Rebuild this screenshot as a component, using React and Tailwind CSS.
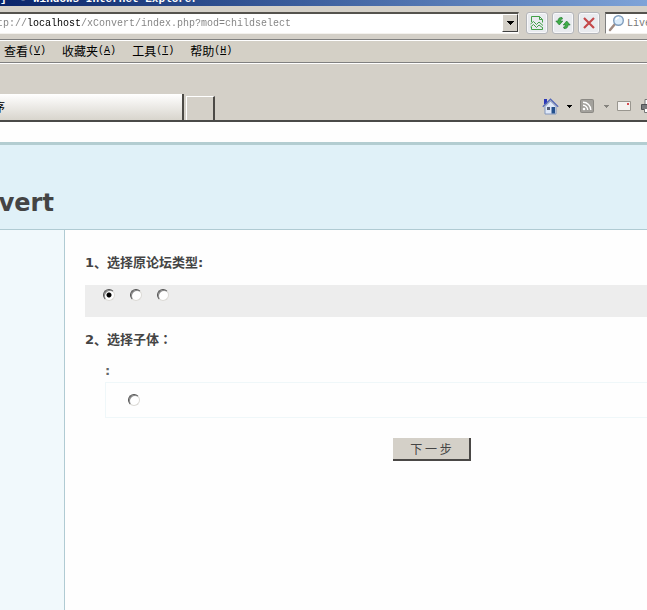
const menus = [
  { label: '查看', mnemonic: 'V' },
  { label: '收藏夹', mnemonic: 'A' },
  { label: '工具', mnemonic: 'T' },
  { label: '帮助', mnemonic: 'H' },
];

function TitleBar() {
  return (
    <div className="flex h-1.5 items-end overflow-hidden bg-linear-to-r from-[#0a246a] to-[#7ea3d8]">
      <div className="mb-px whitespace-pre font-['Liberation_Mono',monospace] text-[11px] leading-[11px] font-bold text-white">
        {']  - Windows Internet Explorer'}
      </div>
    </div>
  );
}

function ToolButton({ label, children }) {
  return (
    <button
      aria-label={label}
      className="flex size-[22px] shrink-0 items-center justify-center rounded-[3px] border border-[#b4b6ba] bg-[#e9ebef] shadow-[inset_0_0_0_1px_#f8f8fa]"
    >
      {children}
    </button>
  );
}

function AddressBar() {
  return (
    <div className="flex h-[33px] items-center gap-1 overflow-hidden bg-[#d4d0c8]">
      <div className="flex h-[22px] min-w-0 flex-1 border-t-2 border-r border-b border-t-[#55534e] border-r-[#f4f2ee] border-b-[#f4f2ee] bg-white">
        <div className="flex min-w-0 flex-1 overflow-hidden">
          <input
            aria-label="地址"
            defaultValue="http://localhost/xConvert/index.php?mod=childselect"
            className="-ml-[15px] block h-full min-w-0 flex-1 bg-[linear-gradient(90deg,#808080_42px,#000_42px,#000_96px,#808080_96px)] bg-clip-text font-['Liberation_Mono',monospace] text-[10px] text-transparent outline-none"
          />
        </div>
        <button
          aria-label="展开地址列表"
          className="flex h-[18px] w-4 items-center justify-center border border-t-white border-r-[#404040] border-b-[#404040] border-l-white bg-[#d4d0c8]"
        >
          <svg width="7" height="4" viewBox="0 0 7 4" shapeRendering="crispEdges">
            <path d="M0 0h7L3.5 4z" />
          </svg>
        </button>
      </div>
      <div className="flex gap-1 pr-px pl-[3px]">
        <ToolButton label="兼容性视图">
          <svg width="14" height="16" viewBox="0 0 14 16" fill="none" stroke="#43a047">
            <path d="M1.500 7V1.500h8l3 3v3M9.500 1.500v3h3M1.500 12v2.500h11V13" />
            <path d="M.5 9l3-2.500 3 3L9 7l4 3.500M.5 12l3-2.500 3 3L9 10l4 3" />
          </svg>
        </ToolButton>
        <ToolButton label="刷新">
          <svg width="16" height="14" viewBox="0 0 16 14" fill="#3fae48" stroke="#1c7228" strokeWidth=".6">
            <path d="M7 1.500C4.500 1 3 2.500 3 5H.8L4.300 9 7.800 5H5.600C5.600 3.800 6 3.200 7.500 3z" />
            <path d="M9 12.500c2.500.5 4-1 4-3.500h2.200l-3.500-4-3.500 4h2.200c0 1.200-.4 1.800-1.900 2z" />
          </svg>
        </ToolButton>
        <ToolButton label="停止">
          <svg width="12" height="12" viewBox="0 0 12 12" fill="none" stroke="#c4484a" strokeWidth="2.200">
            <path d="M1 1l10 10M11 1L1 11" />
          </svg>
        </ToolButton>
      </div>
      <div className="flex h-[22px] w-[42px] shrink-0 items-center overflow-hidden border-t-2 border-b border-l border-t-[#55534e] border-b-[#f4f2ee] border-l-[#808080] bg-white">
        <svg width="18" height="18" viewBox="0 0 18 18" className="mr-px ml-0.5 shrink-0" fill="none">
          <path d="M2 16l5-6" stroke="#a08a80" strokeWidth="2.500" strokeLinecap="round" />
          <circle cx="10.500" cy="6.500" r="4.800" fill="#dcecfa" stroke="#7f9dbd" strokeWidth="1.400" />
          <path d="M8 6a3 3 0 013-2.500" stroke="#fff" strokeWidth="1.500" />
        </svg>
        <input
          aria-label="搜索"
          placeholder="Live Search"
          className="w-20 shrink-0 font-['Liberation_Mono',monospace] text-[10px] outline-none placeholder:text-[#777]"
        />
      </div>
    </div>
  );
}

function MenuBar() {
  return (
    <nav className="flex h-6 items-center gap-4 border-t border-b border-t-[#808080] border-b-[#808080] bg-[#d4d0c6] pl-1 shadow-[inset_0_1px_0_#fff]">
      {menus.map((m) => (
        <button
          key={m.label}
          className="flex items-center font-['Noto_Sans_CJK_SC',sans-serif] text-xs leading-4 whitespace-nowrap text-black"
        >
          {m.label}
          <span className="font-['Liberation_Mono',monospace] text-[10px]">
            (<u>{m.mnemonic}</u>)
          </span>
        </button>
      ))}
    </nav>
  );
}

function HomeIcon() {
  return (
    <svg width="17" height="17" viewBox="0 0 17 17">
      <path d="M2 1h3v5H2z" fill="#2a35b8" />
      <path d="M3 8.500L8.500 3 14 8.500V16H3z" fill="#dfe8f8" stroke="#8296bd" />
      <path d="M.8 8.800L8.500 1.200l7.700 7.600" fill="none" stroke="#5468b8" strokeWidth="1.200" />
      <path d="M5 9h3v3H5z" fill="#555f7a" />
      <path d="M9.500 9H13v6.500H9.500z" fill="#24508c" />
    </svg>
  );
}

function FeedIcon() {
  return (
    <svg width="14" height="14" viewBox="0 0 14 14">
      <rect width="14" height="14" rx="2" fill="#8b8984" />
      <rect x="1" y="1" width="12" height="12" rx="1" fill="#a3a19c" />
      <circle cx="4" cy="10" r="1.300" fill="#fff" />
      <path d="M3 6.300A4.700 4.700 0 017.700 11M3 3.200A7.800 7.800 0 0110.800 11" fill="none" stroke="#fff" strokeWidth="1.400" />
    </svg>
  );
}

function Caret({ color }) {
  return (
    <svg width="5" height="3" viewBox="0 0 5 3" fill={color} shapeRendering="crispEdges">
      <path d="M0 0h5L2.500 3z" />
    </svg>
  );
}

function TabRow() {
  return (
    <div className="flex h-[59px] items-end justify-between overflow-hidden border-b-2 border-b-[#4a4a48] bg-[#d4d0c8] shadow-[inset_0_1px_0_#fff]">
      <div className="flex items-end gap-0.5">
        <button className="flex h-[26px] w-[184px] items-center overflow-hidden border-r-2 border-r-[#4c4a46] bg-linear-to-b from-white to-[#d8d5cd] text-left font-['Noto_Sans_CJK_SC',sans-serif] text-xs whitespace-nowrap text-black">
          <span className="-ml-[19px]">程序</span>
        </button>
        <button
          aria-label="新选项卡"
          className="h-6 w-[29px] border-t border-r-2 border-l border-t-white border-r-[#4c4a46] border-l-white bg-[#d4d0c8]"
        />
      </div>
      <div className="-mr-2.5 flex h-7 items-center">
        <button aria-label="主页" className="mr-2">
          <HomeIcon />
        </button>
        <button aria-label="主页选项" className="mr-2">
          <Caret color="#000" />
        </button>
        <button aria-label="订阅源" className="mr-2.5">
          <FeedIcon />
        </button>
        <button aria-label="订阅源选项" className="mr-2">
          <Caret color="#85837e" />
        </button>
        <button aria-label="阅读邮件" className="mr-2.5">
          <svg width="14" height="10" viewBox="0 0 14 10">
            <path d="M.5.5h13v9H.5z" fill="#f4f2f0" stroke="#99968f" />
            <path d="M10 2h2v2h-2z" fill="#d84a50" />
          </svg>
        </button>
        <button aria-label="打印">
          <svg width="16" height="14" viewBox="0 0 16 14">
            <path d="M4 .5h8V6H4z" fill="#fff" stroke="#777" />
            <path d="M.5 5.500h15v5H.5z" fill="#77797c" stroke="#505254" />
            <path d="M3.500 9.500h9v4h-9z" fill="#fff" stroke="#777" />
          </svg>
        </button>
      </div>
    </div>
  );
}

function Radio({ name, label, defaultChecked }) {
  return (
    <input
      type="radio"
      name={name}
      aria-label={label}
      defaultChecked={defaultChecked}
      className="block size-3 shrink-0 appearance-none rounded-full border border-t-[#505050] border-r-[#dcdad6] border-b-[#dcdad6] border-l-[#505050] bg-white shadow-[inset_1px_1px_0_#8a8a8a] checked:bg-[radial-gradient(circle,#000_2px,#fff_3px)]"
    />
  );
}

function Page() {
  return (
    <div className="flex flex-1 flex-col bg-[#fefefe] pt-5 font-['DejaVu_Sans','Noto_Sans_CJK_SC',sans-serif] text-[13px] text-[#444]">
      <header className="flex h-[88px] items-end overflow-hidden border-t-3 border-b border-t-[#b3cdd1] border-b-[#b0cbd3] bg-[#e0f1f8] pb-[11px]">
        <h1 className="-ml-[68px] text-2xl leading-[30px] font-bold">xConvert</h1>
      </header>
      <div className="flex flex-1">
        <aside className="w-[65px] shrink-0 border-r border-[#b0cbd3] bg-[#f1f9fc]" />
        <main className="min-w-0 flex-1 pt-6 pl-5">
          <h2 className="leading-[18px] font-bold">1、选择原论坛类型:</h2>
          <div className="mt-[13px] flex h-8 gap-[15px] bg-[#ededed] pt-1 pl-[18px]">
            <Radio name="source" label="类型一" defaultChecked />
            <Radio name="source" label="类型二" />
            <Radio name="source" label="类型三" />
          </div>
          <h2 className="mt-[13px] leading-[18px] font-bold">
            2、选择子体<span className="font-['Noto_Sans_CJK_TC',sans-serif]">：</span>
          </h2>
          <div className="mt-[13px] pl-5">
            <h3 className="leading-[18px] font-bold text-[#666]">:</h3>
            <div className="mt-0.5 flex h-9 items-center border-y border-l border-[#eff7f9] pl-[22px]">
              <Radio name="child" label="子体" />
            </div>
          </div>
          <button className="mt-5 ml-[308px] flex h-[23px] w-[78px] items-center justify-center border-r-2 border-b-2 border-[#4a4846] bg-[#d4d0c8] font-['Noto_Sans_CJK_SC',sans-serif] text-xs whitespace-pre text-[#444]">
            下 一 步
          </button>
        </main>
      </div>
    </div>
  );
}

export default function App() {
  return (
    <div className="flex min-h-screen flex-col overflow-hidden">
      <TitleBar />
      <AddressBar />
      <MenuBar />
      <TabRow />
      <Page />
    </div>
  );
}
